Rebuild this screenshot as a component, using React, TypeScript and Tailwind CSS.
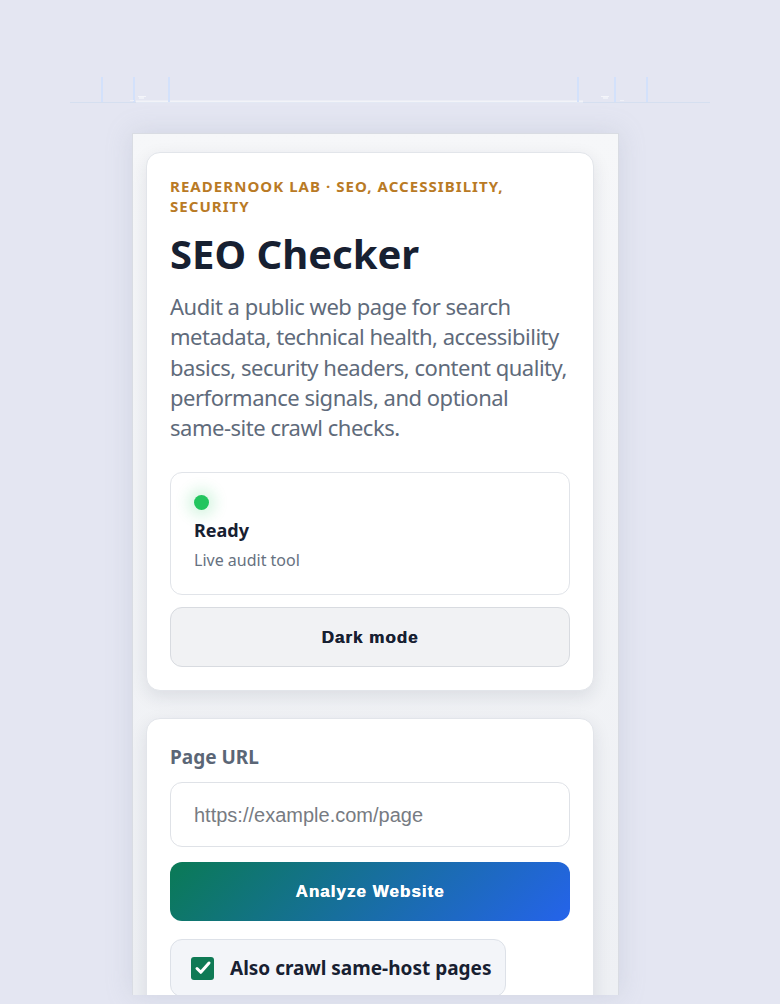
import React from "react";

function TopRule() {
  return (
    <svg width="780" height="110" viewBox="0 0 780 110" className="block">
      <line x1="70" y1="102.5" x2="710" y2="102.5" stroke="#d5dff0" strokeWidth="1" />
      <line x1="136" y1="101.5" x2="583" y2="101.5" stroke="#f2f3f8" strokeWidth="2" />
      {[102, 134, 169, 578, 615, 647].map((x) => (
        <rect key={x} x={x - 1} y={77} width={2} height={25} fill="#d3e1fb" />
      ))}
      <rect x="138" y="96" width="8" height="1" fill="#f4f5fa" />
      <rect x="139" y="97" width="5" height="2" fill="#eff1f8" />
      <rect x="130" y="100" width="4" height="1" fill="#eff1f8" />
      <rect x="601" y="96" width="8" height="1" fill="#f4f5fa" />
      <rect x="603" y="97" width="5" height="2" fill="#eff1f8" />
      <rect x="620" y="100" width="4" height="1" fill="#eff1f8" />
    </svg>
  );
}

const arial = { fontFamily: '"Liberation Sans", Arial, sans-serif' };

export default function App() {
  return (
    <div
      className="relative h-[1004px] w-[780px] overflow-hidden bg-[#e4e6f2]"
      style={{ fontFamily: '"Noto Sans", "Open Sans", sans-serif' }}
    >
      <div className="absolute left-0 top-0">
        <TopRule />
      </div>
      <div className="pt-[133px] pl-[132px]">
        <div className="h-[862px] w-[487px] overflow-hidden border border-[#d9dce3] border-b-0 bg-gradient-to-b from-[#f6f7f9] to-[#eef0f4] shadow-[0_0_24px_rgba(150,160,180,0.25)] pl-[13px] pt-[18px]">
          {/* intro card */}
          <section className="w-[448px] rounded-[14px] border border-[#e2e5ea] bg-white px-[23px] pt-[23px] pb-[23px] shadow-[0_6px_18px_rgba(30,41,59,0.10)]">
            <p className="text-[15px] leading-[20px] font-bold uppercase tracking-[0.07em] text-[#b97a25]">
              ReaderNook Lab · SEO, Accessibility, Security
            </p>
            <h1 className="mt-[14px] text-[40px] leading-[48px] font-bold text-[#172031]">
              SEO Checker
            </h1>
            <p className="mt-[13px] text-[22px] leading-[30.3px] tracking-[-0.022em] text-[#5f6b7b]">
              Audit a public web page for search metadata, technical health, accessibility
              basics, security headers, content quality, performance signals, and optional
              same-site crawl checks.
            </p>
            <div className="mt-[30px] rounded-[12px] border border-[#e1e4e9] bg-white px-[23px] pt-[22px] pb-[23px]">
              <div className="h-[15px] w-[15px] rounded-full bg-[#22c55e] shadow-[0_0_14px_6px_rgba(34,197,94,0.18)]" />
              <div className="mt-[7px] text-[18px] leading-[26px] font-bold text-[#172031]">Ready</div>
              <div className="mt-[6px] text-[16px] leading-[22px] text-[#667180]">Live audit tool</div>
            </div>
            <button
              className="mt-[12px] h-[60px] w-full rounded-[12px] border border-[#d8dbe0] bg-[#f1f2f4] text-[17px] font-bold tracking-[0.06em] text-[#172031] [text-shadow:0.45px_0_0_currentColor]"
              style={arial}
            >
              Dark mode
            </button>
          </section>

          {/* audit form card */}
          <section className="mt-[27px] w-[448px] rounded-[14px] border border-[#e2e5ea] bg-white px-[23px] pt-[25px] pb-[24px] shadow-[0_6px_18px_rgba(30,41,59,0.10)]">
            <label className="block text-[19px] leading-[26px] font-bold text-[#5b6676]">Page URL</label>
            <div
              className="mt-[12px] flex h-[65px] items-center rounded-[12px] border border-[#dfe2e7] bg-white px-[23px] text-[20px] text-[#777b82]"
              style={arial}
            >
              https://example.com/page
            </div>
            <button
              className="mt-[15px] h-[59px] w-full rounded-[12px] bg-[linear-gradient(135deg,#0a7a55,#2563eb)] text-[17px] font-bold tracking-[0.06em] text-white [text-shadow:0.45px_0_0_currentColor]"
              style={arial}
            >
              Analyze Website
            </button>
            <div className="mt-[18px] inline-flex h-[58px] items-center gap-[16px] rounded-[12px] border border-[#dde1e8] bg-[#f3f5f9] pl-[20px] pr-[14px]">
              <span className="flex h-[23px] w-[23px] items-center justify-center rounded-[3px] bg-[#0f7a55]">
                <svg width="20" height="20" viewBox="0 0 20 20" fill="none">
                  <path d="M4 10.5l3.8 3.8L16 5" stroke="white" strokeWidth="3" strokeLinecap="round" strokeLinejoin="round" />
                </svg>
              </span>
              <span className="text-[19px] font-bold text-[#172031]">Also crawl same-host pages</span>
            </div>
          </section>
        </div>
      </div>
    </div>
  );
}
